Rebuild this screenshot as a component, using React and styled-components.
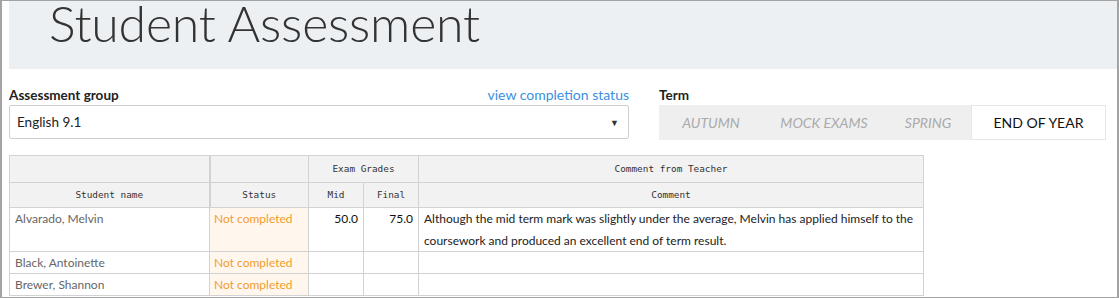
import React from 'react';
import styled, { createGlobalStyle } from 'styled-components';

const GlobalStyle = createGlobalStyle`
  html, body {
    margin: 0;
    padding: 0;
    background: #fff;
  }
  body {
    font-family: Lato, "Open Sans", Arial, sans-serif;
    color: #333;
  }
`;

const Frame = styled.div`
  box-sizing: border-box;
  width: 1119px;
  height: 298px;
  border: solid #a3a3a3;
  border-width: 1px 2px 1px 2px;
  padding-left: 7px;
  overflow: hidden;
`;

const Banner = styled.header`
  box-sizing: border-box;
  height: 68px;
  background: #edf0f3;
  padding: 0 0 0 40px;
  display: flex;
  align-items: flex-start;

  h1 {
    margin: 0;
    font-size: 50px;
    font-weight: 300;
    line-height: 45px;
    color: #333;
    letter-spacing: -0.2px;
  }
`;

const Controls = styled.div`
  display: flex;
  gap: 30px;
  padding-top: 18px;
`;

const Field = styled.div`
  width: ${(p) => p.width}px;
  display: flex;
  flex-direction: column;
`;

const LabelRow = styled.div`
  box-sizing: border-box;
  display: flex;
  justify-content: space-between;
  align-items: flex-end;
  height: 18px;
  padding-bottom: 2px;
  font-size: 13.5px;

  label {
    font-weight: 700;
    color: #222;
  }

  a {
    color: #3b8fe0;
    text-decoration: none;
    font-size: 14px;
  }
`;

const Select = styled.div`
  box-sizing: border-box;
  height: 34px;
  border: 1px solid #cfcfcf;
  border-radius: 2px;
  display: flex;
  align-items: center;
  justify-content: space-between;
  padding: 0 9px 0 7px;
  font-size: 13.5px;
  color: #222;

  span.arrow {
    font-size: 9px;
    color: #333;
  }
`;

const Tabs = styled.div`
  display: flex;
  height: 35px;
  background: #efefef;
`;

const Tab = styled.div`
  box-sizing: border-box;
  width: ${(p) => p.width}px;
  display: flex;
  align-items: center;
  justify-content: center;
  font-size: 14px;
  text-transform: uppercase;
  font-style: ${(p) => (p.active ? 'normal' : 'italic')};
  color: ${(p) => (p.active ? '#111' : '#aaa')};
  background: ${(p) => (p.active ? '#fff' : 'transparent')};
  border: ${(p) => (p.active ? '1px solid #e6e6e6' : 'none')};
`;

const Table = styled.table`
  margin-top: 15px;
  border-collapse: collapse;
  table-layout: fixed;
  width: 914px;
  font-size: 12px;
`;

const Head = styled.th`
  background: #f2f2f2;
  border: 1px solid #d2d2d2;
  border-right-width: ${(p) => (p.thick ? '2px' : '1px')};
  font-family: "DejaVu Sans Mono", "Liberation Mono", monospace;
  font-size: 9.4px;
  font-weight: 400;
  color: #333;
  height: ${(p) => p.h}px;
  padding: 0;
  text-align: center;
  vertical-align: middle;
  line-height: 24px;
`;

const Cell = styled.td`
  border: 1px solid #d2d2d2;
  padding: 0 5px;
  line-height: 21px;
  vertical-align: top;
  text-align: ${(p) => (p.num ? 'right' : 'left')};
  color: ${(p) => (p.num ? '#111' : '#666')};
`;

const StatusCell = styled(Cell)`
  background: #fff7ee;
  color: #f39c2c;
  padding-left: 4px;
`;

const CommentCell = styled(Cell)`
  color: #222;
  line-height: 21.5px;
`;

const rows = [
  {
    name: 'Alvarado, Melvin',
    mid: '50.0',
    final: '75.0',
    comment:
      'Although the mid term mark was slightly under the average, Melvin has applied himself to the coursework and produced an excellent end of term result.',
  },
  { name: 'Black, Antoinette' },
  { name: 'Brewer, Shannon' },
];

const terms = [
  { label: 'Autumn', width: 104 },
  { label: 'Mock Exams', width: 122 },
  { label: 'Spring', width: 86 },
  { label: 'End of Year', width: 135, active: true },
];

export default function App() {
  return (
    <>
      <GlobalStyle />
      <Frame>
        <Banner>
          <h1>Student Assessment</h1>
        </Banner>
        <Controls>
          <Field width={620}>
            <LabelRow>
              <label>Assessment group</label>
              <a href="#status">view completion status</a>
            </LabelRow>
            <Select>
              <span>English 9.1</span>
              <span className="arrow">▼</span>
            </Select>
          </Field>
          <Field width={447}>
            <LabelRow>
              <label>Term</label>
            </LabelRow>
            <Tabs>
              {terms.map((t) => (
                <Tab key={t.label} width={t.width} active={t.active}>
                  {t.label}
                </Tab>
              ))}
            </Tabs>
          </Field>
        </Controls>
        <Table>
          <colgroup>
            <col style={{ width: 200 }} />
            <col style={{ width: 99 }} />
            <col style={{ width: 55 }} />
            <col style={{ width: 55 }} />
            <col style={{ width: 505 }} />
          </colgroup>
          <thead>
            <tr>
              <Head h={26} thick />
              <Head h={26} />
              <Head h={26} colSpan={2}>Exam Grades</Head>
              <Head h={26}>Comment from Teacher</Head>
            </tr>
            <tr>
              <Head h={24} thick>Student name</Head>
              <Head h={24}>Status</Head>
              <Head h={24}>Mid</Head>
              <Head h={24}>Final</Head>
              <Head h={24}>Comment</Head>
            </tr>
          </thead>
          <tbody>
            {rows.map((r) => (
              <tr key={r.name}>
                <Cell>{r.name}</Cell>
                <StatusCell>Not completed</StatusCell>
                <Cell num>{r.mid}</Cell>
                <Cell num>{r.final}</Cell>
                <CommentCell>{r.comment}</CommentCell>
              </tr>
            ))}
          </tbody>
        </Table>
      </Frame>
    </>
  );
}
